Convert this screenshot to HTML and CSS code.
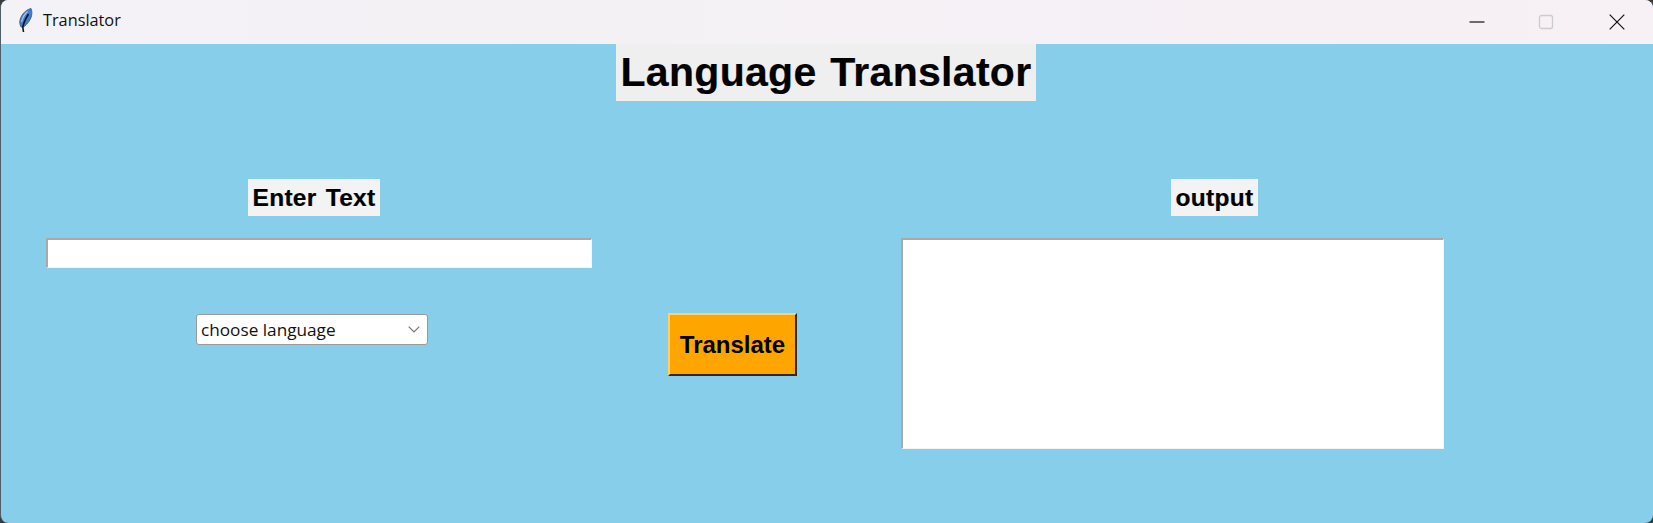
FILE: index.html
```html
<!DOCTYPE html>
<html lang="en">
<head>
<meta charset="utf-8">
<title>Translator</title>
<link rel="stylesheet" href="styles.css">
</head>
<body>
<div class="window">
  <header class="titlebar">
    <svg class="app-icon" width="16" height="26" viewBox="0 0 16 26" aria-hidden="true">
      <path d="M13 .5C7 2 2 8 1.800 14c0 2 .4 3.500 1.200 5l2.500 0C9.500 16 13.500 11 13.800 6c.1-2 0-4-.8-5.500z" fill="#3d7ed6" stroke="#55657c" stroke-width="1"/>
      <path d="M10.500 6C8 10 5.800 14 4.800 19l.7 5" fill="none" stroke="#12161d" stroke-width="1.600"/>
      <path d="M9.500 3.500C6.500 6 4.500 10 3.500 14" fill="none" stroke="#9cc6f2" stroke-width="1.300"/>
    </svg>
    <span class="app-title">Translator</span>
    <div class="controls">
      <button class="ctl" type="button" aria-label="Minimize"><svg width="16" height="16" viewBox="0 0 16 16"><path d="M0.500 8h15" stroke="#111" stroke-width="1.200"/></svg></button>
      <button class="ctl" type="button" aria-label="Maximize"><svg width="16" height="16" viewBox="0 0 16 16"><rect x="1.500" y="1.500" width="13" height="13" rx="2" fill="none" stroke="#cbcbcb" stroke-width="1.300"/></svg></button>
      <button class="ctl ctl-close" type="button" aria-label="Close"><svg width="16" height="16" viewBox="0 0 16 16"><path d="M.7.700l14.600 14.600M15.300.700L.7 15.300" stroke="#111" stroke-width="1.200"/></svg></button>
    </div>
  </header>
  <main class="content">
    <h1 class="heading">Language Translator</h1>
    <div class="columns">
      <section class="col-input">
        <label class="field-label label-enter" for="source">Enter Text</label>
        <input class="entry" id="source" type="text">
        <div class="select-wrap">
          <select class="select" aria-label="choose language"><option>choose language</option></select>
          <svg class="chevron" width="12" height="7" viewBox="0 0 12 7" aria-hidden="true"><path d="M.7.700L6 6l5.300-5.300" fill="none" stroke="#777" stroke-width="1.200"/></svg>
        </div>
      </section>
      <section class="col-action">
        <button class="translate" type="button">Translate</button>
      </section>
      <section class="col-output">
        <span class="field-label label-output">output</span>
        <textarea class="output" aria-label="output"></textarea>
      </section>
    </div>
  </main>
</div>
</body>
</html>
```

FILE: styles.css
```css
* { box-sizing: border-box; }
html, body { margin: 0; height: 100%; }
body { background: #3a3a3a; overflow: hidden; }

.window {
  width: 1653px;
  height: 523px;
  display: flex;
  flex-direction: column;
  border-left: 1px solid #4f5f68;
  border-radius: 8px;
  overflow: hidden;
  background: #87ceeb;
}

.titlebar {
  height: 44px;
  flex: none;
  display: flex;
  align-items: center;
  padding-left: 17px;
  background: linear-gradient(90deg, #f3f2f6, #f7f0f5);
}
.app-icon { flex: none; margin-bottom: 3px; }
.app-title {
  margin: 0 0 4px 9px;
  font: 16.300px "Open Sans", sans-serif;
  color: #111;
}
.controls { margin-left: auto; display: flex; }
.ctl {
  width: 69px;
  height: 44px;
  padding: 0;
  border: 0;
  background: none;
  display: flex;
  align-items: center;
  justify-content: center;
}
.ctl-close { width: 73px; }

.content { flex: 1; display: flex; flex-direction: column; }

.heading {
  align-self: center;
  margin: 0 0 0 -2px;
  width: 420px;
  height: 57px;
  display: flex;
  align-items: center;
  justify-content: center;
  background: #efefef;
  color: #000;
  font: bold 41px "Liberation Sans", sans-serif;
  letter-spacing: .3px;
  word-spacing: 2px;
  -webkit-text-stroke: .2px #000;
}

.columns {
  display: flex;
  align-items: flex-start;
  padding: 78px 0 0 45px;
}

.field-label {
  height: 37px;
  display: flex;
  align-items: center;
  justify-content: center;
  background: #f3f3f4;
  color: #000;
  font: bold 24.500px "Liberation Sans", sans-serif;
  letter-spacing: .3px;
  word-spacing: 2px;
  -webkit-text-stroke: .2px #000;
}

.col-input { width: 546px; flex: none; display: flex; flex-direction: column; }
.label-enter { width: 132px; margin-left: 202px; }
.entry {
  width: 546px;
  height: 30px;
  margin-top: 22px;
  padding: 0 4px;
  background: #fff;
  border-style: solid;
  border-width: 2px 1px 1px 2px;
  border-color: #a9a9a9 #f3f8fb #eef6fa #a9a9a9;
  border-radius: 0;
  outline: 0;
}
.select-wrap { position: relative; width: 232px; margin: 46px 0 0 150px; }
.select {
  display: block;
  width: 232px;
  height: 31px;
  padding: 0 24px 0 4px;
  appearance: none;
  background: #fff;
  border: 1px solid #9b9b9b;
  border-radius: 3px;
  color: #111;
  font: 17.200px "Open Sans", sans-serif;
}
.chevron { position: absolute; right: 8px; top: 12px; pointer-events: none; }

.col-action { flex: none; padding: 134px 0 0 76px; width: 309px; }
.translate {
  width: 129px;
  height: 63px;
  padding: 0;
  background: #ffa500;
  border-style: solid;
  border-width: 2px;
  border-color: #ffd26b #2f2a20 #2f2a20 #ffd26b;
  color: #000;
  font: bold 24px "Liberation Sans", sans-serif;
}

.col-output { flex: none; width: 543px; display: flex; flex-direction: column; }
.label-output { width: 87px; margin-left: 270px; }
.output {
  display: block;
  width: 543px;
  height: 211px;
  margin-top: 22px;
  background: #fff;
  resize: none;
  border-style: solid;
  border-width: 2px 1px 1px 2px;
  border-color: #a9a9a9 #f3f8fb #eef6fa #a9a9a9;
  border-radius: 0;
  outline: 0;
}
```
